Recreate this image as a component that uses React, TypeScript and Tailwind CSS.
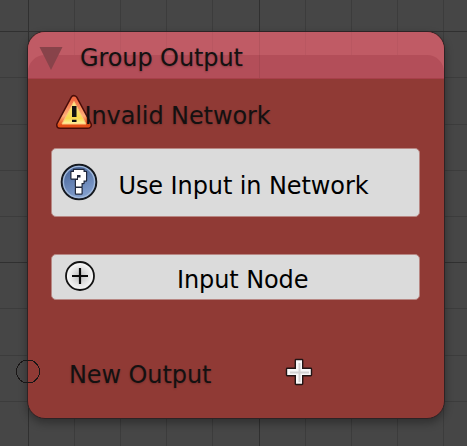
const lines = [28, 74, 120, 166, 212, 259, 305, 351, 397, 443];
const rows = [31, 77, 124, 170, 216, 262, 308, 355, 401, 447];

function Grid() {
  return (
    <svg className="absolute inset-0" width="467" height="446" shapeRendering="crispEdges">
      {lines.map((x) => (
        <rect key={x} x={x} y="0" width="1" height="446" fill={x === 28 || x === 259 ? "#303030" : "#3c3c3c"} />
      ))}
      {rows.map((y) => (
        <rect key={y} x="0" y={y} width="467" height="1" fill={y === 31 || y === 262 ? "#303030" : "#3c3c3c"} />
      ))}
    </svg>
  );
}

function Warning() {
  return (
    <svg width="38" height="36" viewBox="0 0 38 36" className="-mt-[3px] shrink-0">
      <defs>
        <linearGradient id="edge" x1="0" y1="0" x2="0" y2="1">
          <stop offset="0" stopColor="#ef6840" />
          <stop offset=".65" stopColor="#ffad78" />
          <stop offset="1" stopColor="#e65018" />
        </linearGradient>
        <linearGradient id="sun" x1="0" y1="0" x2="0" y2="1">
          <stop offset="0" stopColor="#ffe58a" />
          <stop offset=".75" stopColor="#f8d94e" />
          <stop offset="1" stopColor="#fff3a6" />
        </linearGradient>
      </defs>
      <path d="M19 5 L33 31 H5Z" fill="#4b0d0a" stroke="#4b0d0a" strokeWidth="8" strokeLinejoin="round" />
      <path d="M19 5 L33 31 H5Z" fill="url(#edge)" stroke="url(#edge)" strokeWidth="5" strokeLinejoin="round" />
      <path d="M19 7.5 L31 30 H7Z" fill="url(#sun)" stroke="#ffc578" strokeWidth="1" strokeLinejoin="round" />
      <path d="M17 12h4.5v11H17zM17 25.7h4.5v2.3H17z" fill="#111" />
    </svg>
  );
}

function Question() {
  return (
    <svg width="38" height="38" viewBox="0 0 38 38" className="-mt-[2px] shrink-0">
      <defs>
        <linearGradient id="blue" x1="0" y1="0" x2="0.4" y2="1">
          <stop offset="0" stopColor="#3f5d92" />
          <stop offset="1" stopColor="#829fce" />
        </linearGradient>
      </defs>
      <circle cx="19" cy="19" r="17.3" fill="url(#blue)" stroke="#15191f" strokeWidth="2" />
      <circle cx="19" cy="19" r="15.6" fill="none" stroke="#a1b8d9" strokeWidth="1.3" />
      <path
        d="M14 7h9.5v2H26v8.500h-2.500v2.500h-2v3.500h-5.500V17H18v-2.500h2.500v-2.500h-3.500v3.500h-5.500V9H14zM16 25h5.500v5.500H16z"
        fill="#fff"
        stroke="#20283b"
        strokeWidth="2.4"
        paintOrder="stroke"
        strokeLinejoin="round"
      />
    </svg>
  );
}

function CirclePlus() {
  return (
    <svg width="32" height="32" viewBox="0 0 32 32" className="-mt-[2px] shrink-0">
      <defs>
        <radialGradient id="disc">
          <stop offset="0" stopColor="#bdbdbd" />
          <stop offset=".6" stopColor="#e4e4e4" />
          <stop offset="1" stopColor="#fafafa" />
        </radialGradient>
      </defs>
      <circle cx="16" cy="16" r="14" fill="url(#disc)" stroke="#121212" strokeWidth="1.8" />
      <path d="M16 8v16M8 16h16" stroke="#080808" strokeWidth="2.2" />
    </svg>
  );
}

function Plus() {
  return (
    <svg width="28" height="28" viewBox="0 0 28 28" className="-mt-[3px] shrink-0">
      <path
        d="M11 2.200h6v8.800h8.800v6H17v8.800h-6V17H2.200v-6H11z"
        fill="#f8f8f8"
        stroke="#221515"
        strokeWidth="2.800"
        strokeLinejoin="round"
        paintOrder="stroke"
      />
      <path d="M14.500 5v19M5 14.500h19" stroke="#d2d2d2" strokeWidth="2" />
    </svg>
  );
}

export default function App() {
  return (
    <main className="relative h-[446px] w-[467px] overflow-hidden bg-[#464646] pt-[31px] pl-[27px] font-['DejaVu_Sans',sans-serif] text-[24px] leading-[28px] tracking-[-0.1px] text-[#141111]">
      <Grid />
      <section className="relative h-[388px] w-[418px] rounded-[18px] border border-[#2d2325] bg-[#903a35] shadow-[0_4px_9px_rgba(0,0,0,0.32)]">
        <header className="relative flex h-[47px] items-center overflow-hidden rounded-t-[17px] border-b border-[#a8404a] bg-[#c05b65]">
          <div className="absolute inset-x-0 top-[23px] bottom-0 rounded-t-[17px] bg-[#b34e59]" />
          <svg className="absolute inset-0" width="416" height="47" shapeRendering="crispEdges">
            {lines.slice(1, 9).map((x) => (
              <rect key={x} x={x - 28} y="0" width="1" height={x === 259 ? 46 : 23} fill="#000" opacity={x === 259 ? 0.07 : 0.035} />
            ))}
          </svg>
          <svg className="relative mt-2 ml-[11px]" width="24" height="24" viewBox="0 0 24 24">
            <path d="M.5 0h23L12 23z" fill="#88434a" />
          </svg>
          <h1 className="relative mt-[5px] ml-[17px] origin-bottom scale-y-[1.04] [text-shadow:0_1px_2px_rgba(0,0,0,0.25)]">Group Output</h1>
        </header>
        <div className="flex h-[69px] items-center pl-[27px]">
          <Warning />
          <p className="mt-[4px] -ml-[8.500px] origin-bottom scale-y-[1.04] [text-shadow:0_1px_2px_rgba(0,0,0,0.2)]">Invalid Network</p>
        </div>
        <button className="ml-[23px] flex h-[69px] w-[369px] items-center rounded-[5px] border border-[#b88783] bg-[#dbdbdb] pl-2 text-black">
          <Question />
          <span className="mt-[6px] ml-[20.500px] origin-bottom scale-y-[1.04] whitespace-nowrap">Use Input in Network</span>
        </button>
        <button className="mt-[37px] ml-[23px] flex h-[46px] w-[369px] items-center rounded-[5px] border border-[#b88783] bg-[#dbdbdb] pl-3 text-black">
          <CirclePlus />
          <span className="mt-[5px] ml-[81px] origin-bottom scale-y-[1.04] whitespace-nowrap">Input Node</span>
        </button>
        <div className="mt-[55px] flex h-[36px] items-center pl-[41px]">
          <p className="w-[216px] origin-bottom scale-y-[1.04] pt-1 [text-shadow:0_1px_2px_rgba(0,0,0,0.2)]">New Output</p>
          <Plus />
        </div>
        <svg className="absolute top-[327px] -left-[12px]" width="25" height="25" shapeRendering="crispEdges">
          <circle cx="12" cy="12.500" r="11.500" fill="none" stroke="#191616" />
        </svg>
      </section>
    </main>
  );
}
